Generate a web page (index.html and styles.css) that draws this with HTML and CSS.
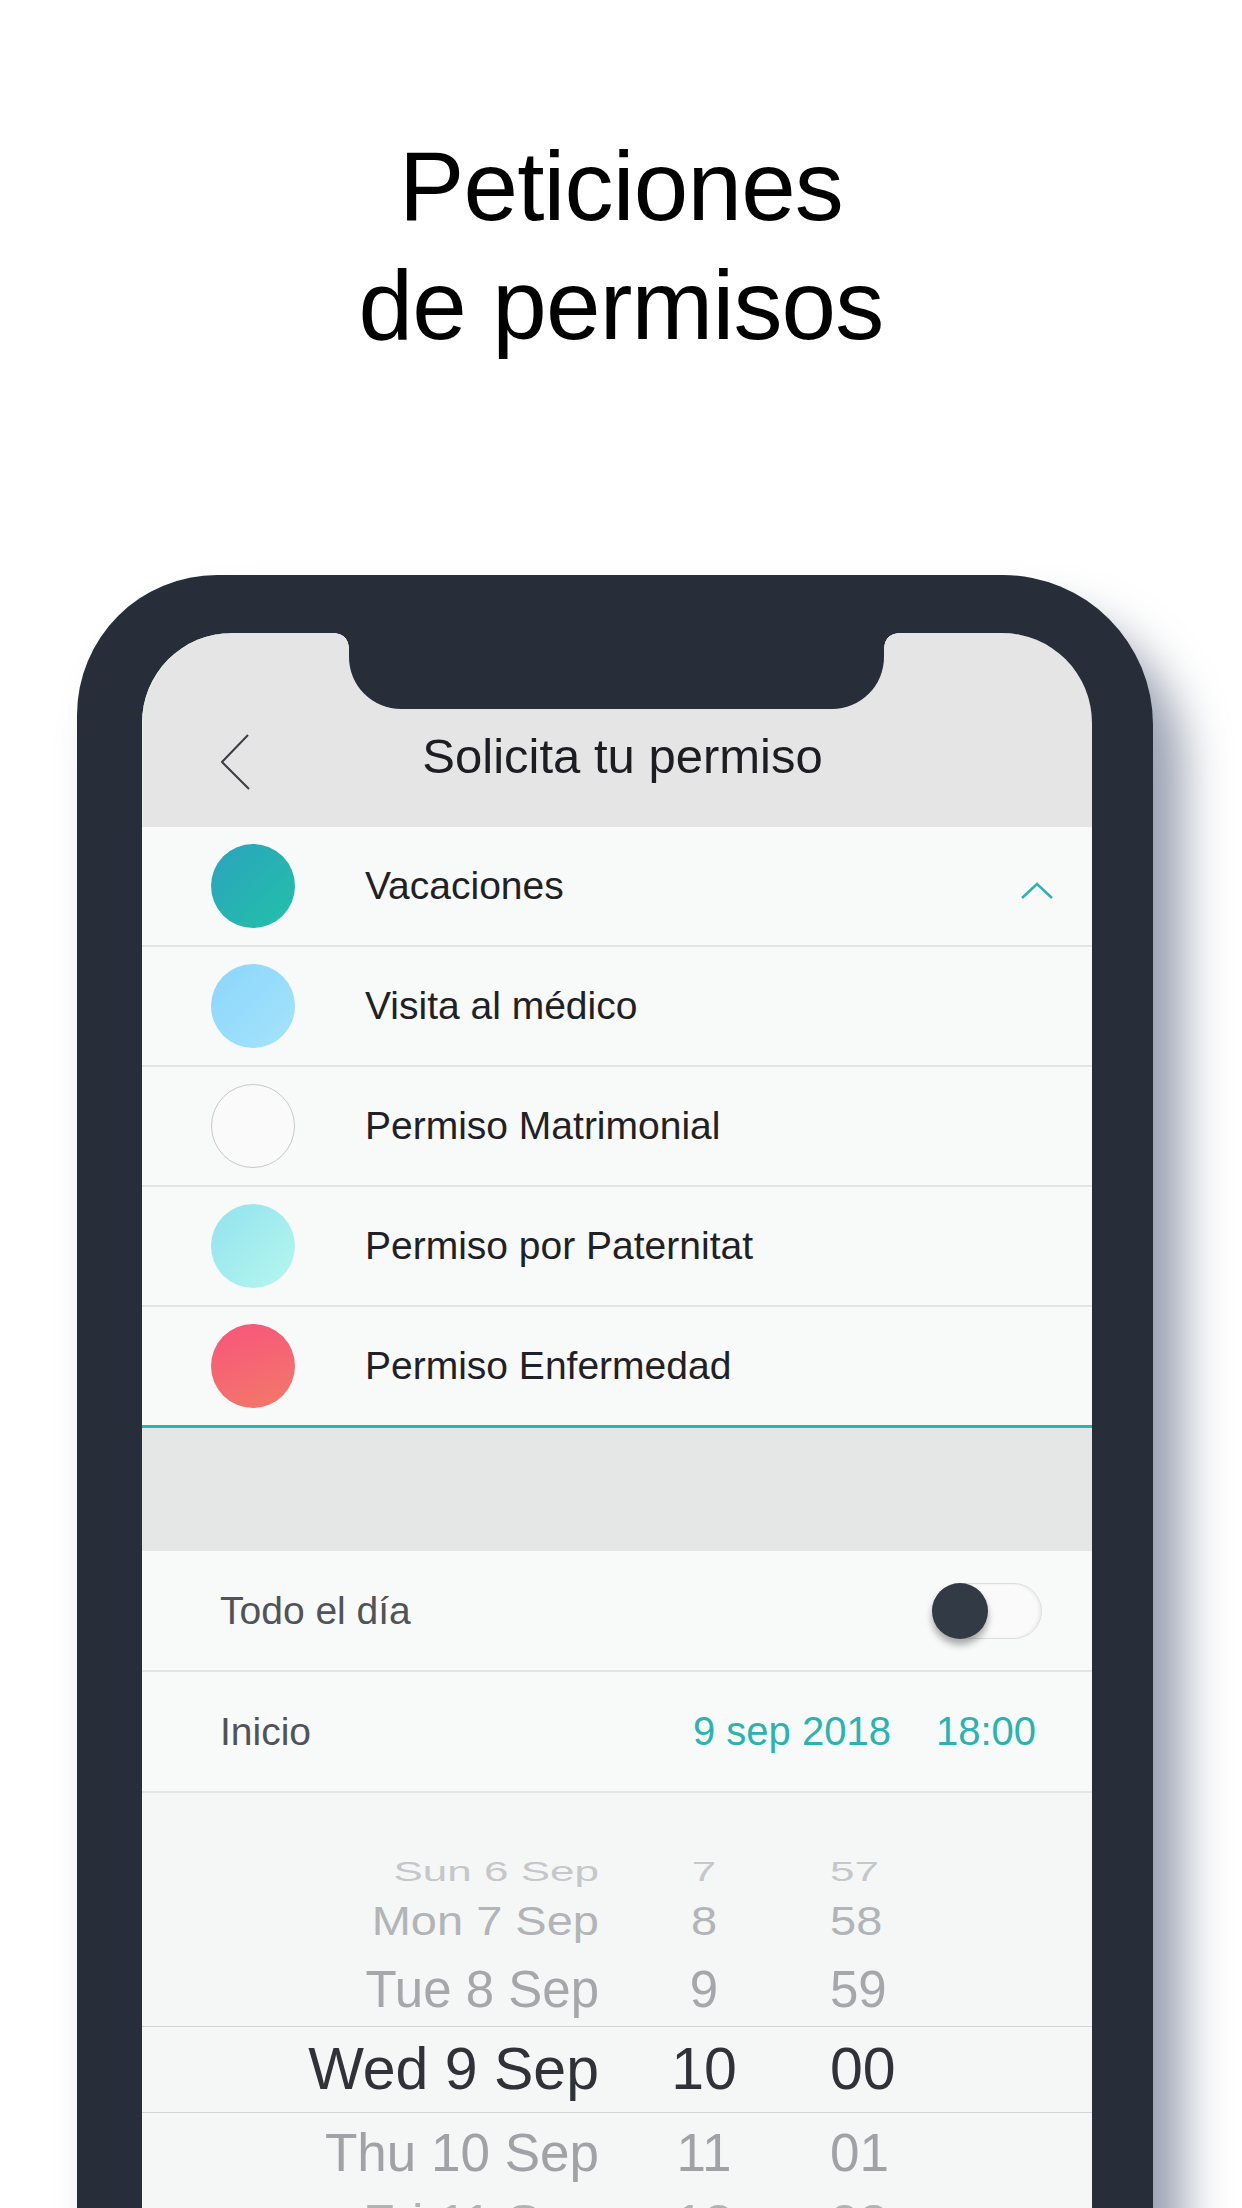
FILE: index.html
```html
<!DOCTYPE html>
<html lang="es">
<head>
    <meta charset="utf-8">
    <title>Peticiones de permisos</title>
    <link rel="stylesheet" href="styles.css">
</head>
<body>
    <h1 class="headline">Peticiones<br>de permisos</h1>

    <div class="phone">
        <div class="screen">
            <div class="notch"></div>

            <!-- Top bar -->
            <header class="topbar">
                <svg class="back" width="30" height="57" viewBox="0 0 30 57">
                    <polyline points="27,1 1,28 28,55" fill="none" stroke="#3b3e44" stroke-width="2"/>
                </svg>
                <h2 class="topbar-title">Solicita tu permiso</h2>
                <span></span>
            </header>

            <!-- Leave types -->
            <ul class="types">
                <li class="type-row">
                    <span class="dot dot-vacaciones"></span>
                    <span class="type-name">Vacaciones</span>
                    <svg class="chev-up" width="32" height="18" viewBox="0 0 32 18">
                        <polyline points="1,16 16,2 31,16" fill="none" stroke="#2ab4b6" stroke-width="2.5"/>
                    </svg>
                </li>
                <li class="type-row">
                    <span class="dot dot-medico"></span>
                    <span class="type-name">Visita al médico</span>
                </li>
                <li class="type-row">
                    <span class="dot dot-matrimonial"></span>
                    <span class="type-name">Permiso Matrimonial</span>
                </li>
                <li class="type-row">
                    <span class="dot dot-paternitat"></span>
                    <span class="type-name">Permiso por Paternitat</span>
                </li>
                <li class="type-row last">
                    <span class="dot dot-enfermedad"></span>
                    <span class="type-name">Permiso Enfermedad</span>
                </li>
            </ul>

            <div class="band"></div>

            <!-- Settings -->
            <div class="setting-row">
                <span class="setting-label">Todo el día</span>
                <span class="toggle"><span class="knob"></span></span>
            </div>
            <div class="setting-row">
                <span class="setting-label">Inicio</span>
                <span class="setting-value">
                    <span>9 sep 2018</span>
                    <span>18:00</span>
                </span>
            </div>

            <!-- Date picker -->
            <div class="picker">
                <div class="pick-row r1"><span>Sun 6 Sep</span><span>7</span><span>57</span></div>
                <div class="pick-row r2"><span>Mon 7 Sep</span><span>8</span><span>58</span></div>
                <div class="pick-row r3"><span>Tue 8 Sep</span><span>9</span><span>59</span></div>
                <div class="pick-row selected"><span>Wed 9 Sep</span><span>10</span><span>00</span></div>
                <div class="pick-row r5"><span>Thu 10 Sep</span><span>11</span><span>01</span></div>
                <div class="pick-row r6"><span>Fri 11 Sep</span><span>12</span><span>02</span></div>
            </div>
        </div>
    </div>
</body>
</html>
```

FILE: styles.css
```css
:root {
    --frame: #272e3a;
    --teal: #2ab3b1;
    --row-bg: #f8f9f9;
    --line: #e3e4e5;
}

html, body {
    margin: 0;
    padding: 0;
    height: 2208px;
    overflow: hidden;
}

body {
    background: #ffffff;
    font-family: "Liberation Sans", Arial, sans-serif;
    color: #1f2124;
}

.headline {
    margin: 0;
    padding-top: 127px;
    font-size: 98px;
    font-weight: 400;
    line-height: 119px;
    letter-spacing: -0.8px;
    text-align: center;
    color: #000;
}

/* Phone */
.phone {
    margin: 210px 0 0 77px;
    width: 1076px;
    height: 1700px;
    box-sizing: border-box;
    padding: 58px 61px 0 65px;
    background: var(--frame);
    border-radius: 140px 150px 0 0;
    box-shadow: 30px 40px 45px rgba(50, 65, 100, 0.5);
}

.screen {
    position: relative;
    height: 100%;
    background: #e5e5e5;
    border-radius: 90px 90px 0 0;
    box-shadow: inset 2px 0 0 #e2ece2;
    overflow: hidden;
}

.notch {
    position: absolute;
    top: 0;
    left: 207px;
    width: 535px;
    height: 76px;
    background: var(--frame);
    border-radius: 0 0 52px 52px;
}

.notch::before,
.notch::after {
    content: "";
    position: absolute;
    top: 0;
    width: 14px;
    height: 14px;
}

.notch::before {
    left: -14px;
    background: radial-gradient(circle at 0 100%, transparent 13.5px, var(--frame) 14px);
}

.notch::after {
    right: -14px;
    background: radial-gradient(circle at 100% 100%, transparent 13.5px, var(--frame) 14px);
}

/* Top bar */
.topbar {
    height: 194px;
    box-sizing: border-box;
    padding-top: 93px;
    display: grid;
    grid-template-columns: 1fr auto 1fr;
    align-items: start;
}

.back {
    margin: 8px 0 0 79px;
}

.topbar-title {
    margin: 0 0 0 11px;
    font-size: 49px;
    font-weight: 400;
    line-height: 60px;
    color: #1d1e21;
}

/* Leave types */
.types {
    list-style: none;
    margin: 0;
    padding: 0;
    background: var(--row-bg);
}

.type-row {
    display: flex;
    align-items: center;
    height: 118px;
    padding: 0 39px 0 69px;
    border-bottom: 2px solid var(--line);
}

.type-row.last {
    border-bottom: 3px solid var(--teal);
}

.dot {
    width: 84px;
    height: 84px;
    border-radius: 50%;
    box-sizing: border-box;
    flex-shrink: 0;
}

.dot-vacaciones { background: linear-gradient(135deg, #2ba3be, #22c1a8); }
.dot-medico { background: linear-gradient(135deg, #8bd5fc, #a5e4fa); }
.dot-matrimonial { background: #fafafa; border: 1px solid #c9c9c9; }
.dot-paternitat { background: linear-gradient(135deg, #92e2ee, #b6f7ee); }
.dot-enfermedad { background: linear-gradient(160deg, #f8547d, #f27a67); }

.type-name {
    flex: 1;
    margin-left: 70px;
    font-size: 39px;
    color: #1f2124;
}

.chev-up {
    margin-top: 10px;
}

.band {
    height: 123px;
    background: #e5e6e6;
}

/* Settings */
.setting-row {
    display: flex;
    align-items: center;
    justify-content: space-between;
    height: 119px;
    padding: 0 50px 0 78px;
    background: var(--row-bg);
    border-bottom: 2px solid var(--line);
}

.setting-label {
    font-size: 39px;
    color: #505358;
}

.setting-value {
    display: flex;
    gap: 45px;
    margin-right: 6px;
    font-size: 40px;
    color: var(--teal);
}

.toggle {
    display: flex;
    width: 110px;
    height: 56px;
    box-sizing: border-box;
    border: 1px solid #dcdddf;
    border-radius: 28px;
    background: #fafafa;
    box-shadow: inset -2px 0 3px rgba(0, 0, 0, 0.06);
}

.knob {
    width: 56px;
    height: 56px;
    margin: -1px;
    border-radius: 50%;
    background: #323a46;
    box-shadow: 0 6px 7px rgba(0, 0, 0, 0.32);
}

/* Picker */
.picker {
    height: 600px;
    padding-top: 63px;
    background: #f5f6f6;
}

.pick-row {
    display: grid;
    grid-template-columns: 457px 210px 1fr;
    white-space: nowrap;
}

.pick-row span:nth-child(1) { text-align: right; }
.pick-row span:nth-child(2) { text-align: center; }
.pick-row span:nth-child(3) { padding-left: 21px; }

.r1 {
    height: 31px;
    line-height: 31px;
    font-size: 44px;
    color: #c5c7c9;
    transform: scaleY(0.62);
}

.r2 {
    height: 67px;
    line-height: 67px;
    font-size: 47px;
    color: #b2b4b7;
    transform: scaleY(0.86);
}

.r3 {
    height: 72px;
    line-height: 72px;
    font-size: 51px;
    color: #a5a7aa;
}

.selected {
    height: 85px;
    line-height: 85px;
    font-size: 59px;
    color: #2f3237;
    border-top: 1px solid #d3d6d8;
    border-bottom: 1px solid #d3d6d8;
}

.r5 {
    height: 80px;
    line-height: 80px;
    font-size: 53px;
    color: #a0a2a5;
}

.r6 {
    height: 56px;
    line-height: 56px;
    font-size: 52px;
    color: #b0b2b5;
    transform: scaleY(0.9);
}
```
